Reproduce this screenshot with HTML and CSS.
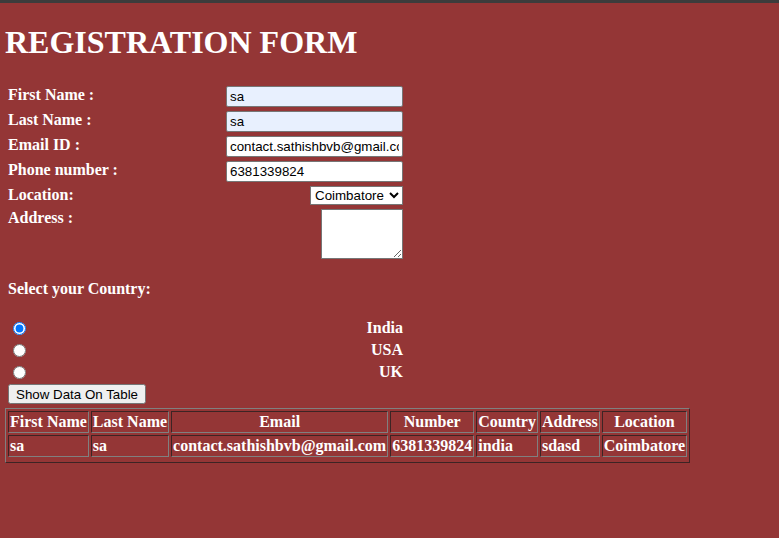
FILE: index.html
```html
<!DOCTYPE html>
<html lang="en">
<head>
<meta charset="utf-8">
<title>Registration Form</title>
<link rel="stylesheet" href="styles.css">
</head>
<body>
<div class="topbar"></div>
<div class="page">
  <h1 class="title">REGISTRATION FORM</h1>
  <form class="reg">
    <div class="fields">
      <label class="lbl" for="fn">First Name :</label>
      <input class="txt autofill" id="fn" type="text" value="sa">
      <label class="lbl" for="ln">Last Name :</label>
      <input class="txt autofill" id="ln" type="text" value="sa">
      <label class="lbl" for="em">Email ID :</label>
      <input class="txt" id="em" type="text" value="contact.sathishbvb@gmail.com">
      <label class="lbl" for="ph">Phone number :</label>
      <input class="txt" id="ph" type="text" value="6381339824">
      <label class="lbl" for="loc">Location:</label>
      <select class="sel" id="loc"><option>Coimbatore</option></select>
      <label class="lbl" for="addr">Address :</label>
      <textarea class="area" id="addr"></textarea>
    </div>
    <div class="country-title">Select your Country:</div>
    <div class="radios">
      <input class="radio" type="radio" name="c" id="in" checked>
      <label class="rlbl" for="in">India</label>
      <input class="radio" type="radio" name="c" id="us">
      <label class="rlbl" for="us">USA</label>
      <input class="radio" type="radio" name="c" id="uk">
      <label class="rlbl" for="uk">UK</label>
    </div>
    <button class="btn" type="button">Show Data On Table</button>
  </form>
  <table class="data">
    <thead>
      <tr><th>First Name</th><th>Last Name</th><th>Email</th><th>Number</th><th>Country</th><th>Address</th><th>Location</th></tr>
    </thead>
    <tbody>
      <tr><td>sa</td><td>sa</td><td>contact.sathishbvb@gmail.com</td><td>6381339824</td><td>india</td><td>sdasd</td><td>Coimbatore</td></tr>
    </tbody>
  </table>
</div>
</body>
</html>
```
FILE: styles.css
```css
html, body {
  margin: 0;
  padding: 0;
}
body {
  background: #943636;
  color: #ffffff;
  font-family: "Liberation Serif", "Times New Roman", serif;
  font-size: 16px;
  font-weight: bold;
}
.topbar {
  height: 3px;
  background: #3c3c3c;
}
.page {
  padding: 0 5px;
}
.title {
  font-size: 32px;
  font-weight: bold;
  margin: 21.44px 0;
}
.reg {
  padding: 3px 0 0 3px;
  width: 398px;
}
.fields {
  display: grid;
  grid-template-columns: 214px 177px;
  grid-template-rows: 21px 21px 21px 21px 19px 50px;
  column-gap: 4px;
  row-gap: 4px;
  align-items: start;
}
.lbl {
  line-height: normal;
}
.txt {
  justify-self: end;
  box-sizing: border-box;
  width: 177px;
  height: 21px;
  margin: 0;
  padding: 1px 3px;
  border: 1px solid #767676;
  border-radius: 2px;
  background: #ffffff;
  color: #000000;
  font-family: "Liberation Sans", Arial, sans-serif;
  font-size: 13.33px;
  font-weight: normal;
}
.autofill {
  background: #e8f0fe;
}
.sel {
  justify-self: end;
  box-sizing: border-box;
  width: 93px;
  height: 19px;
  margin: 0;
  font-family: "Liberation Sans", Arial, sans-serif;
  font-size: 13.33px;
  font-weight: normal;
  color: #000000;
  background: #ffffff;
}
.area {
  justify-self: end;
  box-sizing: border-box;
  width: 82px;
  height: 50px;
  margin: 0;
  background: #ffffff;
}
.country-title {
  margin-top: 21.5px;
  line-height: normal;
}
.radios {
  display: grid;
  grid-template-columns: 214px 177px;
  column-gap: 4px;
  row-gap: 3.6px;
  margin-top: 21px;
}
.radio {
  display: block;
  margin: 2.5px 0 0 5px;
  width: 13px;
  height: 13px;
}
.rlbl {
  justify-self: end;
  line-height: normal;
  height: 18.4px;
}
.btn {
  display: block;
  margin: 2.1px 0 0 0;
  font-family: "Liberation Sans", Arial, sans-serif;
  font-size: 13.33px;
  font-weight: normal;
  height: 20px;
}
.data {
  margin-top: 4px;
  border-collapse: separate;
  border-spacing: 2px;
  border-style: solid;
  border-width: 1px;
  border-color: #808080 #3c2424 #3c2424 #808080;
  padding-bottom: 3px;
}
.data th,
.data td {
  padding: 1px;
  border-style: solid;
  border-width: 1px;
  border-color: #3c2424 #808080 #808080 #3c2424;
  font-weight: bold;
  white-space: nowrap;
}
.data th {
  text-align: center;
}
.data td {
  text-align: left;
}
```
